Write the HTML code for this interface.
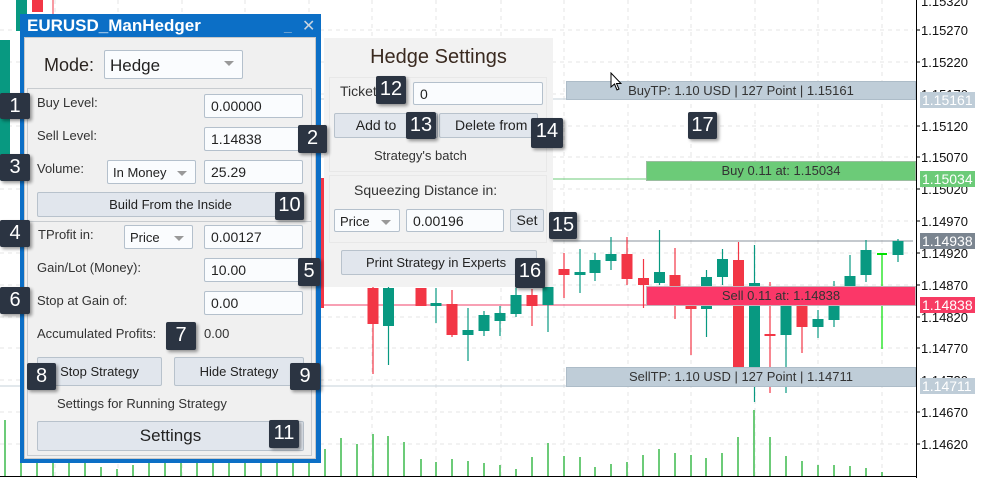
<!DOCTYPE html>
<html><head><meta charset="utf-8"><style>
*{margin:0;padding:0;box-sizing:border-box}
body{width:983px;height:478px;overflow:hidden;background:#fff;font-family:"Liberation Sans",sans-serif;position:relative;color:#222}
.a{position:absolute}
.inp{position:absolute;background:#fafcfe;border:1px solid #b4c0cc;font-size:14px;padding:3px 0 0 6px;color:#222;border-radius:2px}
.dd{position:absolute;background:#fafcfe;border:1px solid #b4c0cc;font-size:13px;padding:4px 0 0 5px;border-radius:2px}
.dd:after{content:"";position:absolute;right:8px;top:10px;border-left:5px solid transparent;border-right:5px solid transparent;border-top:5px solid #999}
.btn{position:absolute;background:#e1e6ed;border:1px solid #b8c2cc;font-size:13px;text-align:center;color:#222;border-radius:2px}
.lb{position:absolute;font-size:13px;color:#333}
.bd{position:absolute;background:#2b3442;color:#fff;font-size:20px;text-align:center;border-radius:2px;box-shadow:2px 2px 3px rgba(0,0,0,.4);line-height:27px}
.tag{position:absolute;left:920px;width:55px;height:16px;color:#fff;font-size:14px;line-height:16px;padding-left:2px}
.pl{position:absolute;left:921px;font-size:13px;color:#111}
</style></head><body>
<svg class="a" style="left:0;top:0" width="983" height="478">
<g stroke="#e4e4e4" stroke-dasharray="4,4" stroke-width="1">
<line x1="0" x2="913" y1="30" y2="30"/><line x1="0" x2="913" y1="62" y2="62"/><line x1="0" x2="913" y1="94" y2="94"/><line x1="0" x2="913" y1="126" y2="126"/><line x1="0" x2="913" y1="157" y2="157"/><line x1="0" x2="913" y1="189" y2="189"/><line x1="0" x2="913" y1="221" y2="221"/><line x1="0" x2="913" y1="253" y2="253"/><line x1="0" x2="913" y1="285" y2="285"/><line x1="0" x2="913" y1="317" y2="317"/><line x1="0" x2="913" y1="348" y2="348"/><line x1="0" x2="913" y1="380" y2="380"/><line x1="0" x2="913" y1="412" y2="412"/><line x1="0" x2="913" y1="444" y2="444"/>
<line x1="55" x2="55" y1="0" y2="476"/><line x1="118" x2="118" y1="0" y2="476"/><line x1="182" x2="182" y1="0" y2="476"/><line x1="245" x2="245" y1="0" y2="476"/><line x1="309" x2="309" y1="0" y2="476"/><line x1="372" x2="372" y1="0" y2="476"/><line x1="436" x2="436" y1="0" y2="476"/><line x1="501" x2="501" y1="0" y2="476"/><line x1="564" x2="564" y1="0" y2="476"/><line x1="628" x2="628" y1="0" y2="476"/><line x1="691" x2="691" y1="0" y2="476"/><line x1="755" x2="755" y1="0" y2="476"/><line x1="818" x2="818" y1="0" y2="476"/><line x1="882" x2="882" y1="0" y2="476"/>
</g>
<line x1="0" x2="913" y1="99" y2="99" stroke="#c4d0da"/>
<line x1="0" x2="913" y1="179" y2="179" stroke="#6ccb78"/>
<line x1="0" x2="913" y1="241" y2="241" stroke="#8a939c"/>
<line x1="0" x2="913" y1="305" y2="305" stroke="#f0406a"/>
<line x1="0" x2="913" y1="386" y2="386" stroke="#c4d0da"/>
<line x1="5" x2="5" y1="40" y2="180" stroke="#089981"/><rect x="0" y="40" width="10" height="140" fill="#089981"/>
<rect x="16" y="0" width="11" height="31" fill="#089981"/><rect x="32" y="0" width="11" height="12" fill="#f23645"/>
<line x1="53" x2="53" y1="0" y2="14" stroke="#f23645"/>
<rect x="320" y="178" width="4" height="130" fill="#f23645"/>
<g stroke-width="1.2">
<line x1="373" x2="373" y1="280" y2="374" stroke="#f23645"/>
<line x1="388.5" x2="388.5" y1="280" y2="365" stroke="#089981"/>
<line x1="436" x2="436" y1="288" y2="323" stroke="#089981"/>
<line x1="452" x2="452" y1="290" y2="337" stroke="#f23645"/>
<line x1="468" x2="468" y1="308" y2="361" stroke="#089981"/>
<line x1="484" x2="484" y1="311" y2="336" stroke="#089981"/>
<line x1="500" x2="500" y1="306" y2="336" stroke="#089981"/>
<line x1="516" x2="516" y1="288" y2="317" stroke="#089981"/>
<line x1="532" x2="532" y1="289" y2="326" stroke="#f23645"/>
<line x1="548" x2="548" y1="278" y2="332" stroke="#089981"/>
<line x1="564" x2="564" y1="253" y2="298" stroke="#f23645"/>
<line x1="580" x2="580" y1="249" y2="293" stroke="#089981"/>
<line x1="595" x2="595" y1="253" y2="281" stroke="#089981"/>
<line x1="611" x2="611" y1="237" y2="270" stroke="#089981"/>
<line x1="627" x2="627" y1="237" y2="285" stroke="#f23645"/>
<line x1="643.5" x2="643.5" y1="259" y2="308" stroke="#f23645"/>
<line x1="659.5" x2="659.5" y1="230" y2="285" stroke="#089981"/>
<line x1="675" x2="675" y1="248" y2="319" stroke="#f23645"/>
<line x1="691" x2="691" y1="287" y2="355" stroke="#f23645"/>
<line x1="706.5" x2="706.5" y1="270" y2="337" stroke="#089981"/>
<line x1="722.5" x2="722.5" y1="249" y2="285" stroke="#089981"/>
<line x1="738.5" x2="738.5" y1="242" y2="367" stroke="#f23645"/>
<line x1="754.5" x2="754.5" y1="245" y2="402" stroke="#089981"/>
<line x1="770" x2="770" y1="282" y2="393" stroke="#f23645"/>
<line x1="786" x2="786" y1="300" y2="393" stroke="#089981"/>
<line x1="802" x2="802" y1="300" y2="353" stroke="#f23645"/>
<line x1="818" x2="818" y1="310" y2="338" stroke="#089981"/>
<line x1="834" x2="834" y1="281" y2="327" stroke="#089981"/>
<line x1="850" x2="850" y1="255" y2="300" stroke="#089981"/>
<line x1="866" x2="866" y1="240" y2="282" stroke="#089981"/>
<line x1="882" x2="882" y1="254" y2="349" stroke="#00e000"/>
<line x1="898" x2="898" y1="239" y2="262" stroke="#089981"/>
</g>
<g>
<rect x="367.5" y="288" width="11" height="36" fill="#f23645"/>
<rect x="383" y="288" width="11" height="38" fill="#089981"/>
<rect x="415.5" y="288" width="11" height="18" fill="#f23645"/>
<rect x="430.5" y="303" width="11" height="3" fill="#089981"/>
<rect x="446.5" y="304" width="11" height="31" fill="#f23645"/>
<rect x="462.5" y="330" width="11" height="5" fill="#089981"/>
<rect x="478.5" y="315" width="11" height="16" fill="#089981"/>
<rect x="494.5" y="313" width="11" height="8" fill="#089981"/>
<rect x="510.5" y="295" width="11" height="19" fill="#089981"/>
<rect x="526.5" y="295" width="11" height="11" fill="#f23645"/>
<rect x="542.5" y="287" width="11" height="18" fill="#089981"/>
<rect x="558.5" y="269" width="11" height="6" fill="#f23645"/>
<rect x="574.5" y="272" width="11" height="3" fill="#089981"/>
<rect x="589.5" y="260" width="11" height="13" fill="#089981"/>
<rect x="605.5" y="254" width="11" height="7" fill="#089981"/>
<rect x="621.5" y="254" width="11" height="25" fill="#f23645"/>
<rect x="638" y="278" width="11" height="7" fill="#f23645"/>
<rect x="654" y="272" width="11" height="11" fill="#089981"/>
<rect x="669.5" y="275" width="11" height="12" fill="#f23645"/>
<rect x="685.5" y="305" width="11" height="4" fill="#f23645"/>
<rect x="701" y="277" width="11" height="32" fill="#089981"/>
<rect x="717" y="259" width="11" height="18" fill="#089981"/>
<rect x="733" y="260" width="11" height="107" fill="#f23645"/>
<rect x="749" y="283" width="11" height="84" fill="#089981"/>
<rect x="764.5" y="334" width="11" height="2" fill="#f23645"/>
<rect x="780.5" y="305" width="11" height="30" fill="#089981"/>
<rect x="796.5" y="305" width="11" height="22" fill="#f23645"/>
<rect x="812.5" y="319" width="11" height="8" fill="#089981"/>
<rect x="828.5" y="306" width="11" height="14" fill="#089981"/>
<rect x="844.5" y="276" width="11" height="17" fill="#089981"/>
<rect x="860.5" y="250" width="11" height="25" fill="#089981"/>
<rect x="877" y="253" width="10" height="2" fill="#00e000"/>
<rect x="892.5" y="241" width="11" height="14" fill="#089981"/>
</g>
<g stroke="#6ccb78" stroke-width="2">
<line x1="5" x2="5" y1="420" y2="476"/><line x1="21" x2="21" y1="462" y2="476"/><line x1="37" x2="37" y1="462" y2="476"/><line x1="53" x2="53" y1="462" y2="476"/><line x1="69" x2="69" y1="462" y2="476"/><line x1="85" x2="85" y1="462" y2="476"/><line x1="101" x2="101" y1="467" y2="476"/><line x1="117" x2="117" y1="469" y2="476"/><line x1="133" x2="133" y1="465" y2="476"/><line x1="149" x2="149" y1="462" y2="476"/><line x1="165" x2="165" y1="462" y2="476"/><line x1="181" x2="181" y1="462" y2="476"/><line x1="197" x2="197" y1="462" y2="476"/><line x1="213" x2="213" y1="462" y2="476"/><line x1="229" x2="229" y1="462" y2="476"/><line x1="245" x2="245" y1="462" y2="476"/><line x1="261" x2="261" y1="462" y2="476"/><line x1="277" x2="277" y1="462" y2="476"/><line x1="293" x2="293" y1="462" y2="476"/><line x1="309" x2="309" y1="462" y2="476"/><line x1="325" x2="325" y1="449" y2="476"/>
<line x1="341" x2="341" y1="438" y2="476"/><line x1="357" x2="357" y1="444" y2="476"/><line x1="373" x2="373" y1="434" y2="476"/><line x1="388" x2="388" y1="436" y2="476"/><line x1="404" x2="404" y1="442" y2="476"/><line x1="421" x2="421" y1="459" y2="476"/><line x1="436" x2="436" y1="462" y2="476"/><line x1="452" x2="452" y1="459" y2="476"/><line x1="468" x2="468" y1="461" y2="476"/><line x1="484" x2="484" y1="463" y2="476"/><line x1="500" x2="500" y1="465" y2="476"/><line x1="516" x2="516" y1="469" y2="476"/><line x1="532" x2="532" y1="457" y2="476"/><line x1="548" x2="548" y1="443" y2="476"/><line x1="564" x2="564" y1="456" y2="476"/><line x1="580" x2="580" y1="457" y2="476"/><line x1="595" x2="595" y1="467" y2="476"/><line x1="611" x2="611" y1="464" y2="476"/><line x1="627" x2="627" y1="462" y2="476"/><line x1="643" x2="643" y1="455" y2="476"/><line x1="659" x2="659" y1="449" y2="476"/><line x1="675" x2="675" y1="453" y2="476"/><line x1="691" x2="691" y1="455" y2="476"/><line x1="706" x2="706" y1="458" y2="476"/><line x1="722" x2="722" y1="453" y2="476"/><line x1="738" x2="738" y1="437" y2="476"/><line x1="754" x2="754" y1="410" y2="476"/><line x1="770" x2="770" y1="437" y2="476"/><line x1="786" x2="786" y1="456" y2="476"/><line x1="802" x2="802" y1="461" y2="476"/><line x1="818" x2="818" y1="465" y2="476"/><line x1="834" x2="834" y1="465" y2="476"/><line x1="850" x2="850" y1="466" y2="476"/><line x1="866" x2="866" y1="468" y2="476"/><line x1="882" x2="882" y1="472" y2="476"/>
</g>
<line x1="0" x2="917" y1="476.5" y2="476.5" stroke="#000"/>
<line x1="916.5" x2="916.5" y1="0" y2="478" stroke="#000"/>
<g stroke="#000"><line x1="916" x2="920" y1="30" y2="30"/><line x1="916" x2="920" y1="62" y2="62"/><line x1="916" x2="920" y1="126" y2="126"/><line x1="916" x2="920" y1="157" y2="157"/><line x1="916" x2="920" y1="189" y2="189"/><line x1="916" x2="920" y1="221" y2="221"/><line x1="916" x2="920" y1="253" y2="253"/><line x1="916" x2="920" y1="285" y2="285"/><line x1="916" x2="920" y1="317" y2="317"/><line x1="916" x2="920" y1="348" y2="348"/><line x1="916" x2="920" y1="412" y2="412"/><line x1="916" x2="920" y1="444" y2="444"/></g>
</svg>
<div class="pl" style="top:-6px">1.15320</div>
<div class="pl" style="top:23px">1.15270</div><div class="pl" style="top:55px">1.15220</div><div class="pl" style="top:87px">1.15170</div><div class="pl" style="top:119px">1.15120</div><div class="pl" style="top:150px">1.15070</div><div class="pl" style="top:182px">1.15020</div><div class="pl" style="top:214px">1.14970</div><div class="pl" style="top:246px">1.14920</div><div class="pl" style="top:278px">1.14870</div><div class="pl" style="top:310px">1.14820</div><div class="pl" style="top:341px">1.14770</div><div class="pl" style="top:373px">1.14720</div><div class="pl" style="top:405px">1.14670</div><div class="pl" style="top:437px">1.14620</div>
<div class="tag" style="top:92px;background:#bfcdd8">1.15161</div>
<div class="tag" style="top:171px;background:#6ccb78">1.15034</div>
<div class="tag" style="top:233px;background:#7b8590">1.14938</div>
<div class="tag" style="top:297px;background:#f73b63">1.14838</div>
<div class="tag" style="top:378px;background:#bfcdd8">1.14711</div>
<div class="a" style="left:566px;top:81px;width:350px;height:19px;background:#bfcdd8;border:1px solid #adbcc8;font-size:13px;text-align:center;line-height:17px;color:#333">BuyTP: 1.10 USD | 127 Point | 1.15161</div>
<div class="a" style="left:646px;top:161px;width:270px;height:20px;background:#6ccb78;border:1px solid #9bbda0;font-size:13px;text-align:center;line-height:18px;color:#333">Buy 0.11 at: 1.15034</div>
<div class="a" style="left:646px;top:286px;width:270px;height:20px;background:#fb3768;border:1px solid #c8b0b8;font-size:13px;text-align:center;line-height:18px;color:#333">Sell 0.11 at: 1.14838</div>
<div class="a" style="left:566px;top:367px;width:350px;height:20px;background:#bfcdd8;border:1px solid #adbcc8;font-size:13px;text-align:center;line-height:18px;color:#333">SellTP: 1.10 USD | 127 Point | 1.14711</div>
<svg class="a" style="left:610px;top:72px" width="12" height="20"><path d="M1 1 L1 15 L4.5 12 L7 18 L9 17 L6.5 11.5 L11 11.5 Z" fill="#fff" stroke="#000" stroke-width="1"/></svg>
<div class="a" style="left:324px;top:38px;width:229px;height:249px;background:#f2f2f2"></div>
<div class="a" style="left:329px;top:77px;width:218px;height:95px;border:1px solid #e8e8e8"></div>
<div class="a" style="left:329px;top:175px;width:218px;height:68px;border:1px solid #e8e8e8"></div>
<div class="a" style="left:324px;top:46px;width:229px;text-align:center;font-size:20px;color:#3a2a20">Hedge Settings</div>
<div class="lb" style="left:340px;top:83px;font-size:14px">Ticket</div>
<div class="inp" style="left:413px;top:82px;width:130px;height:23px">0</div>
<div class="btn" style="left:334px;top:113px;width:104px;height:25px;line-height:23px;font-size:14px;padding-right:20px">Add to</div>
<div class="btn" style="left:439px;top:113px;width:99px;height:25px;line-height:23px;font-size:14px;text-align:left;padding-left:15px">Delete from</div>
<div class="lb" style="left:374px;top:148px">Strategy's batch</div>
<div class="lb" style="left:354px;top:182px;font-size:14px">Squeezing Distance in:</div>
<div class="dd" style="left:334px;top:209px;width:66px;height:23px">Price</div>
<div class="inp" style="left:406px;top:209px;width:98px;height:23px">0.00196</div>
<div class="btn" style="left:510px;top:209px;width:34px;height:23px;line-height:21px;font-size:14px">Set</div>
<div class="btn" style="left:341px;top:250px;width:196px;height:25px;line-height:23px;font-size:13px;text-align:left;padding-left:24px">Print Strategy in Experts</div>
<div class="a" style="left:20px;top:14px;width:301px;height:449px;background:#0c6fc6"></div>
<div class="a" style="left:24px;top:37px;width:292px;height:422px;background:#f0f0f0;border:1px solid #c8c8c8"></div>
<div class="a" style="left:27px;top:16px;color:#fff;font-size:17px;font-weight:bold">EURUSD_ManHedger</div>
<div class="a" style="left:284px;top:18px;color:#b8c8d8;font-size:14px;font-weight:bold">_</div>
<div class="a" style="left:302px;top:16px;color:#c8d4e0;font-size:16px">✕</div>
<div class="lb" style="left:44px;top:55px;font-size:18px;color:#2a2420">Mode:</div>
<div class="dd" style="left:104px;top:50px;width:139px;height:29px;font-size:17px;padding-top:5px">Hedge</div>
<div class="a" style="left:27px;top:88px;width:285px;height:134px;border:1px solid #c8ccd0"></div>
<div class="a" style="left:27px;top:221px;width:285px;height:235px;border:1px solid #c8ccd0"></div>
<div class="lb" style="left:37px;top:95px">Buy Level:</div>
<div class="inp" style="left:204px;top:94px;width:99px;height:24px">0.00000</div>
<div class="lb" style="left:37px;top:128px">Sell Level:</div>
<div class="inp" style="left:204px;top:127px;width:99px;height:24px">1.14838</div>
<div class="lb" style="left:37px;top:161px">Volume:</div>
<div class="dd" style="left:107px;top:160px;width:89px;height:24px">In Money</div>
<div class="inp" style="left:204px;top:160px;width:99px;height:24px">25.29</div>
<div class="btn" style="left:37px;top:192px;width:267px;height:25px;line-height:23px">Build From the Inside</div>
<div class="lb" style="left:38px;top:227px">TProfit in:</div>
<div class="dd" style="left:124px;top:225px;width:69px;height:24px">Price</div>
<div class="inp" style="left:204px;top:225px;width:99px;height:24px">0.00127</div>
<div class="lb" style="left:37px;top:260px">Gain/Lot (Money):</div>
<div class="inp" style="left:204px;top:258px;width:99px;height:24px">10.00</div>
<div class="lb" style="left:37px;top:293px">Stop at Gain of:</div>
<div class="inp" style="left:204px;top:291px;width:99px;height:24px">0.00</div>
<div class="lb" style="left:37px;top:326px">Accumulated Profits:</div>
<div class="lb" style="left:204px;top:326px">0.00</div>
<div class="btn" style="left:37px;top:357px;width:125px;height:29px;line-height:27px">Stop Strategy</div>
<div class="btn" style="left:174px;top:357px;width:130px;height:29px;line-height:27px">Hide Strategy</div>
<div class="lb" style="left:57px;top:396px">Settings for Running Strategy</div>
<div class="btn" style="left:37px;top:421px;width:267px;height:30px;line-height:28px;font-size:17px">Settings</div>
<div class="bd" style="left:0;top:93px;width:30px;height:26px">1</div>
<div class="bd" style="left:298px;top:125px;width:29px;height:28px">2</div>
<div class="bd" style="left:0;top:154px;width:30px;height:27px">3</div>
<div class="bd" style="left:275px;top:192px;width:29px;height:28px">10</div>
<div class="bd" style="left:0;top:220px;width:30px;height:27px">4</div>
<div class="bd" style="left:298px;top:258px;width:22px;height:28px">5</div>
<div class="bd" style="left:0;top:287px;width:30px;height:27px">6</div>
<div class="bd" style="left:166px;top:322px;width:30px;height:28px">7</div>
<div class="bd" style="left:27px;top:363px;width:29px;height:27px">8</div>
<div class="bd" style="left:290px;top:363px;width:30px;height:27px">9</div>
<div class="bd" style="left:269px;top:420px;width:30px;height:28px">11</div>
<div class="bd" style="left:376px;top:76px;width:30px;height:28px">12</div>
<div class="bd" style="left:406px;top:112px;width:30px;height:27px">13</div>
<div class="bd" style="left:531px;top:118px;width:32px;height:30px">14</div>
<div class="bd" style="left:549px;top:212px;width:28px;height:27px">15</div>
<div class="bd" style="left:515px;top:258px;width:30px;height:30px">16</div>
<div class="bd" style="left:688px;top:112px;width:29px;height:27px">17</div>
</body></html>
